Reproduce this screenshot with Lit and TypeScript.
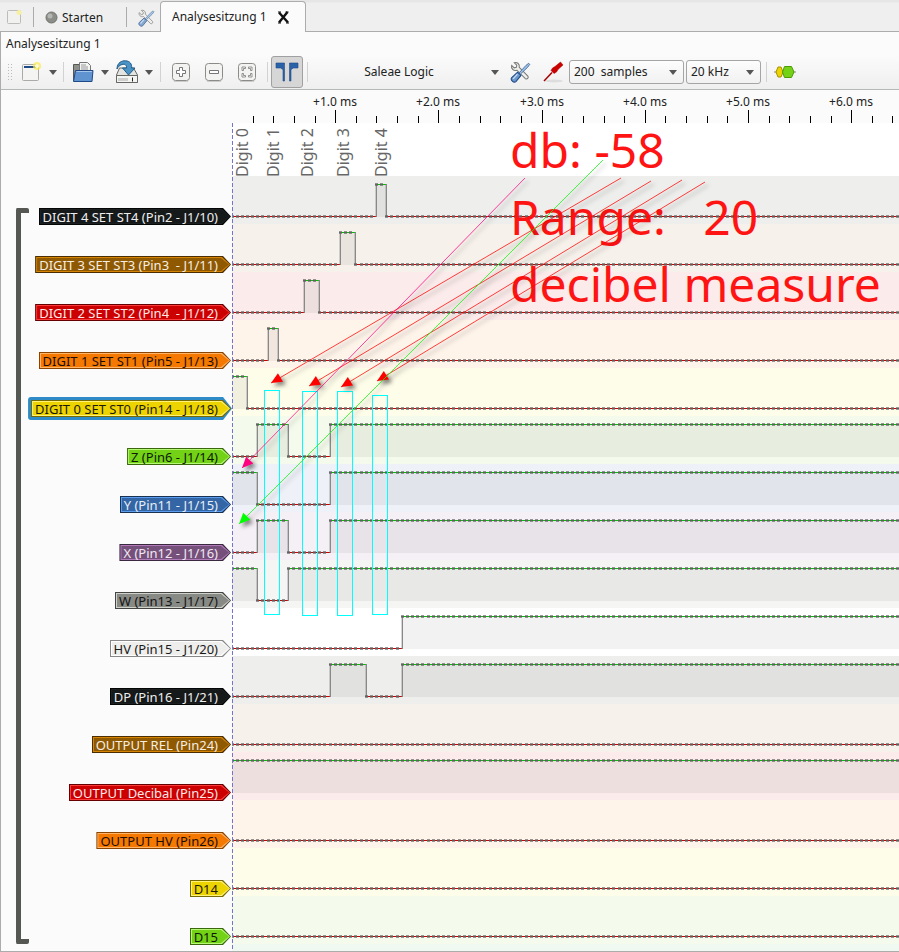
import { LitElement, html, svg, css, nothing } from "lit";
import { customElement, state } from "lit/decorators.js";

/** Horizontal distance of two samples, in pixels (20 kHz, 0.05 ms each). */
const SAMPLE = 5.16;
const SAMPLES = 400;
/** Width of everything left of the time axis. */
const GUTTER = 232;

interface Channel {
  name: string;
  tone: string;
  /** Level of the first sample, then the samples at which it changes. */
  start: 0 | 1;
  edges: number[];
}

const channels: Channel[] = [
  { name: "DIGIT 4 SET ST4 (Pin2 - J1/10)", tone: "black", start: 0, edges: [28, 30] },
  { name: "DIGIT 3 SET ST3 (Pin3  - J1/11)", tone: "brown", start: 0, edges: [21, 24] },
  { name: "DIGIT 2 SET ST2 (Pin4  - J1/12)", tone: "red", start: 0, edges: [14, 17] },
  { name: "DIGIT 1 SET ST1 (Pin5 - J1/13)", tone: "orange", start: 0, edges: [7, 9] },
  { name: "DIGIT 0 SET ST0 (Pin14 - J1/18)", tone: "yellow", start: 1, edges: [3] },
  { name: "Z (Pin6 - J1/14)", tone: "green", start: 0, edges: [5, 11, 19] },
  { name: "Y (Pin11 - J1/15)", tone: "blue", start: 1, edges: [5, 19] },
  { name: "X (Pin12 - J1/16)", tone: "purple", start: 0, edges: [5, 11, 19] },
  { name: "W (Pin13 - J1/17)", tone: "grey", start: 1, edges: [5, 11] },
  { name: "HV (Pin15 - J1/20)", tone: "white", start: 0, edges: [33] },
  { name: "DP (Pin16 - J1/21)", tone: "black", start: 0, edges: [19, 26, 33] },
  { name: "OUTPUT REL (Pin24)", tone: "brown", start: 0, edges: [] },
  { name: "OUTPUT Decibal (Pin25)", tone: "red", start: 1, edges: [] },
  { name: "OUTPUT HV (Pin26)", tone: "orange", start: 0, edges: [] },
  { name: "D14", tone: "yellow", start: 0, edges: [] },
  { name: "D15", tone: "green", start: 0, edges: [] },
];

const at = (n: number) => Math.floor(n * SAMPLE);

const toolsIcon = svg`
  <path d="M2.500 4.200 5 6.500 7 6 7.400 4 5 1.600c2.400-.8 5.400.8 4.800 4.400l8.200 8.400c1.200 1.600-.8 3.600-2.400 2.400L7.600 8.800C4.200 9.800 1.800 7 2.500 4.200z" fill="#eeeeec" stroke="#777975"/>
  <path d="M18.800 2.200 19.800 3.200 17.800 6 10.800 12.600 9.600 11.400 16.200 4.200z" fill="#9fc0e6" stroke="#3c6598" stroke-width=".8"/>
  <path d="M8.200 10.600 11.400 13.800 6.600 19.600C4.600 21.400.8 18 2.600 15.800z" fill="#6b97cc" stroke="#204a87"/>
  <path d="M8 12.500 4 17" stroke="#c8dcf3" stroke-width="1.200"/>`;

@customElement("app-root")
export class AppRoot extends LitElement {
  @state() private selected = 4;
  @state() private axis = 0;

  private observer = new ResizeObserver(() => this.measure());

  private measure() {
    this.axis = Math.max(0, this.clientWidth - GUTTER);
  }

  connectedCallback() {
    super.connectedCallback();
    this.observer.observe(this);
    this.measure();
  }

  disconnectedCallback() {
    super.disconnectedCallback();
    this.observer.disconnect();
  }

  static styles = css`
    :host {
      display: block;
      overflow: hidden;
      background: #ededed;
      color: #222;
      font: 12px/16px "Noto Sans", "Open Sans", sans-serif;
    }
    * { box-sizing: border-box; }
    button, select {
      font: inherit;
      color: inherit;
      margin: 0;
      padding: 0;
      border: 0;
      background: none;
    }
    svg { display: block; flex: none; }

    .tabs {
      display: flex;
      height: 32px;
      padding-left: 6px;
      align-items: stretch;
      background: linear-gradient(#e6e6e6 0 2px, #efefef 3px);
      box-shadow: inset 0 -1px #acacac;
    }
    .tabs > button { display: flex; align-items: center; padding-top: 3px; }
    .tabs .run { gap: 4px; padding-left: 11px; width: 92px; }
    .tabs .cfg { padding-left: 10px; width: 33px; }
    .rule { width: 1px; background: #acacac; margin: 7px 0 5px; }
    .tabs .new { width: 27px; padding-bottom: 1px; }
    .tab {
      display: flex;
      align-items: center;
      gap: 8px;
      width: 146px;
      padding-left: 11px;
      margin-top: 1px;
      border: 1px solid #acacac;
      border-bottom: 0;
      border-radius: 4px 4px 0 0;
      background: #fbfbfb;
      white-space: nowrap;
    }
    .tab span { width: 97px; }

    .window { border: solid #acacac; border-width: 0 0 1px 1px; background: #fbfbfb; }
    .title { margin: 0; padding: 4px 5px 3px; height: 23px; font: inherit; }

    .bar {
      display: flex;
      align-items: center;
      height: 35px;
      padding-left: 6px;
      background: linear-gradient(#fbfbfb, #efefef);
      border-bottom: 1px solid #b4b8b6;
    }
    .bar > * { flex: none; }
    .bar button, .bar .cell { display: flex; align-items: center; justify-content: center; height: 32px; }
    .grip {
      width: 5px;
      height: 18px;
      background: radial-gradient(circle, #bbb 1px, transparent 1px) 0 0 / 3px 3px;
    }
    .sep { width: 1px; height: 20px; background: #d2d2d2; }
    .w8 { width: 8px; }
    .w10 { width: 10px; }
    .w14 { width: 14px; }
    .w30 { width: 30px; }
    .w33 { width: 33px; }
    .w36 { width: 36px; }
    .bar .on {
      width: 32px;
      border: 1px solid #a0a0a0;
      border-radius: 3px;
      background: #d6d6d6;
    }
    .bar .device { width: 192px; padding-right: 4px; }
    .device span { flex: 1; padding-right: 4px; text-align: center; }
    .combo { position: relative; height: 24px; }
    .combo select {
      appearance: none;
      width: 100%;
      height: 24px;
      padding: 0 4px;
      border: 1px solid #a5a5a5;
      border-radius: 3px;
      background: linear-gradient(#fdfdfd, #f1f1f1);
    }
    .combo svg { position: absolute; right: 7px; top: 10px; pointer-events: none; }
    .combo.count { width: 115px; }
    .combo.rate { width: 75px; margin: 0 5px 0 2px; }

    .ruler { height: 33px; padding-left: 231px; }
    .ruler svg { width: 100%; height: 33px; }
    .ruler text { text-anchor: middle; fill: #222; }

    .board { display: grid; grid-template-columns: 31px minmax(0, 1fr); position: relative; }
    .group {
      width: 13px;
      margin: 85px 0 7px 15px;
      border: 5px solid #555753;
      border-right: 0;
      border-radius: 2px;
    }
    .head, .channel, .foot { display: grid; grid-template-columns: 200px minmax(0, 1fr); }
    .head { height: 53px; }
    .head i { grid-column: 2; background: #fff; }
    .foot { height: 7px; }
    .foot i { grid-column: 2; background: #eff8f1; }
    .channel { height: 48px; }
    .trace { width: 100%; height: 48px; background: var(--tint); }
    .channel .tag {
      position: relative;
      isolation: isolate;
      justify-self: end;
      align-self: end;
      height: 17px;
      margin: 0 1px -1px 0;
      padding: 2px 13px 0 4px;
      font-size: 13px;
      line-height: 15px;
      white-space: pre;
      color: var(--ink);
    }
    .tag::before, .tag::after, .tag i {
      content: "";
      position: absolute;
      clip-path: polygon(0 0, calc(100% - 8px) 0, 100% 50%, calc(100% - 8px) 100%, 0 100%);
    }
    .tag::before { z-index: -2; inset: 0; background: var(--line); }
    .tag::after { z-index: -1; inset: 2px; background: var(--fill); }
    .tag i { z-index: -1; inset: 1px; background: var(--shine); }
    .tag b {
      position: absolute;
      z-index: -3;
      inset: -3px -1px -3px -3px;
      border-radius: 3px;
      background: #2f8bc8;
      clip-path: polygon(0 0, calc(100% - 9px) 0, 100% 50%, calc(100% - 9px) 100%, 0 100%);
    }

    .black { --fill: #16191a; --shine: #1c2021; --line: #050606; --ink: #eee; --tint: #eeeeec; }
    .brown { --fill: #8f5902; --shine: #d58404; --line: #4a2e01; --ink: #f6eee2; --tint: #f6f1ea; }
    .red { --fill: #cc0000; --shine: #ff3c3c; --line: #660000; --ink: #fbe8e8; --tint: #fbebeb; }
    .orange { --fill: #f57900; --shine: #ffb468; --line: #8a4400; --ink: #1c0e00; --tint: #fef4ea; }
    .yellow { --fill: #edd400; --shine: #fff27a; --line: #776a00; --ink: #1c1900; --tint: #fefdea; }
    .green { --fill: #73d216; --shine: #b4f876; --line: #3a690b; --ink: #0e1a02; --tint: #f4fbed; }
    .blue { --fill: #3465a4; --shine: #5a9cf0; --line: #1a3252; --ink: #e6eef8; --tint: #eef2f8; }
    .purple { --fill: #75507b; --shine: #b07ab8; --line: #3a283e; --ink: #f0e8f2; --tint: #f5f0f5; }
    .grey { --fill: #888a85; --shine: #cfd2ca; --line: #444542; --ink: #141414; --tint: #f5f5f4; }
    .white { --fill: #eeeeec; --shine: #fff; --line: #888; --ink: #1a1a1a; --tint: #fff; }

    .fill { fill: #000; fill-opacity: .05; }
    .edge { fill: #888; }
    .soft { fill: #888; fill-opacity: .35; }
    .lo { fill: #c80000; }
    .hi { fill: #00c000; }
    .base { fill: #000; fill-opacity: .05; }
    .dot { fill: #606060; fill-opacity: .85; }
    .halo { fill: #606060; fill-opacity: .65; }

    .notes {
      position: absolute;
      left: 231px;
      top: 0;
      width: calc(100% - 231px);
      height: 100%;
      overflow: hidden;
      pointer-events: none;
    }
    .notes text { white-space: pre; }
    .big { font-size: 48px; fill: #ff1414; }
    .digit { font-size: 16px; fill: #666; }
    .cursor { stroke: #7474cc; stroke-dasharray: 4 2; }
    .box { fill: none; stroke: #00ffff; }
    .arrow { filter: drop-shadow(3px 3px 2px rgba(0, 0, 0, .5)); }
  `;

  private caret() {
    return html`<svg width="8" height="5" viewBox="0 0 8 5" aria-hidden="true"><path d="M0 0h8L4 5z" fill="#555"/></svg>`;
  }

  private trace(ch: Channel) {
    const bounds = [0, ...ch.edges, SAMPLES];
    const parts = [];
    const levels: number[] = [];
    for (let i = 0; i + 1 < bounds.length; i++) {
      const level = (ch.start + i) % 2;
      const x = at(bounds[i]);
      const w = at(bounds[i + 1]) - x;
      for (let n = bounds[i]; n < bounds[i + 1]; n++) levels[n] = level;
      if (level) {
        parts.push(svg`<rect class="fill" x=${x} y="8" width=${w} height="32"/>
          <rect class="base" x=${x} y="40" width=${w} height="1"/>
          <rect class="hi" x=${x} y="8" width=${w} height="1"/>`);
      } else {
        parts.push(svg`<rect class="lo" x=${x} y="40" width=${w} height="1"/>`);
      }
      if (i > 0) {
        parts.push(svg`<rect class="edge" x=${x} y="8" width="1" height="33"/>
          <rect class="soft" x=${x - 1} y="8" width="1" height="33"/>`);
      }
    }
    const top = (l: number) => (l ? 7 : 39);
    const halo = levels.map((l, n) => `M${at(n) - 1} ${top(l)}h3v3h-3z`).join("");
    const dots = levels.map((l, n) => `M${at(n) - 1} ${top(l) + 1}h3v1h-3z`).join("");
    return html`<svg class="trace ${ch.tone}" aria-hidden="true">${parts}<path class="halo" d=${halo}/><path class="dot" d=${dots}/></svg>`;
  }

  private ruler() {
    const ticks = [];
    for (let i = 1; i * 4 * SAMPLE < this.axis; i++) {
      const x = Math.round(i * 4 * SAMPLE);
      const major = i % 5 === 0;
      ticks.push(svg`<rect x=${x} y=${major ? 20 : 26} width="1" height=${major ? 13 : 7}/>
        ${major && x + 24 < this.axis ? svg`<text x=${x} y="16">+${(i / 5).toFixed(1)} ms</text>` : nothing}`);
    }
    return html`<div class="ruler"><svg>${ticks}</svg></div>`;
  }

  private arrow(x1: number, y1: number, x2: number, y2: number, color: string) {
    const angle = (Math.atan2(y2 - y1, x2 - x1) * 180) / Math.PI;
    return svg`<g class="arrow">
      <path d="M${x1} ${y1}L${x2} ${y2}" stroke=${color} stroke-opacity=".75"/>
      <path d="M0 0-11-5V5z" fill=${color} transform="translate(${x2} ${y2}) rotate(${angle})"/>
    </g>`;
  }

  private notes() {
    return html`<svg class="notes">
      <path class="cursor" d="M.5 0V1000"/>
      ${[16, 47, 81, 117, 155].map(
        (x, i) => svg`<text class="digit" transform="translate(${x} 54) rotate(-90)">Digit ${i}</text>`
      )}
      <text class="big" x="278" y="45">db: -58</text>
      <text class="big" x="278" y="112">Range:   20</text>
      <text class="big" x="278" y="179">decibel measure</text>
      ${[[32, 267, 224], [70, 268, 224], [105, 268, 224], [140, 272, 219]].map(
        ([x, y, h]) => svg`<rect class="box" x="${x}.5" y="${y}.5" width="15" height=${h}/>`
      )}
      ${this.arrow(389, 55, 39, 260, "#ff0000")}
      ${this.arrow(419, 58, 77, 263, "#ff0000")}
      ${this.arrow(450, 57, 109, 264, "#ff0000")}
      ${this.arrow(473, 59, 145, 258, "#ff0000")}
      ${this.arrow(293, 55, 10, 345, "#ff0080")}
      ${this.arrow(371, 37, 7, 401, "#00ff00")}
    </svg>`;
  }

  render() {
    return html`
      <nav class="tabs">
        <button class="new" aria-label="Neue Sitzung">
          <svg width="16" height="16" viewBox="0 0 16 16">
            <rect x="1.500" y="1.500" width="13" height="13" rx="1" fill="#f1f1f0" stroke="#bcbcba"/>
            <circle cx="13" cy="3.500" r="2.500" fill="#f6f0a0"/>
          </svg>
        </button>
        <span class="rule"></span>
        <button class="run">
          <svg width="13" height="13" viewBox="0 0 13 13">
            <circle cx="6.500" cy="6.500" r="5.500" fill="#8b8d88" stroke="#70726e"/>
            <circle cx="5" cy="5" r="2.500" fill="#b4b6b1"/>
          </svg>
          Starten
        </button>
        <span class="rule"></span>
        <button class="cfg" aria-label="Einstellungen">
          <svg width="18" height="18" viewBox="0 0 21 21" opacity=".8">${toolsIcon}</svg>
        </button>
        <div class="tab">
          <span>Analysesitzung 1</span>
          <button aria-label="Schließen">
            <svg width="13" height="13" viewBox="0 0 13 13">
              <path d="M2 1.500 11 11.500M10.500 1 2 11.500" stroke="#111" stroke-width="2.400"/>
              <path d="M1 1h3M8.500 1h3M1 12h3M9 12h3" stroke="#111" stroke-width="1"/>
            </svg>
          </button>
        </div>
      </nav>
      <main class="window">
        <h1 class="title">Analysesitzung 1</h1>
        <div class="bar" role="toolbar">
          <span class="grip"></span>
          <button class="w36" aria-label="Neu">
            <svg width="22" height="22" viewBox="0 0 22 22">
              <rect x="3.500" y="3.500" width="16" height="16" rx="1" fill="#f4f4f3" stroke="#a9aba7"/>
              <path d="M5 5h13v2H5z" fill="#204a87"/>
              <circle cx="18" cy="5" r="4" fill="#fce94f" opacity=".7"/>
              <circle cx="18" cy="5" r="2" fill="#fffbd0"/>
            </svg>
          </button>
          <span class="cell w10">${this.caret()}</span>
          <span class="cell w10"><span class="sep"></span></span>
          <button class="w30" aria-label="Öffnen">
            <svg width="22" height="22" viewBox="0 0 22 22">
              <path d="M1.500 19.500V3.500h7l1 2v14z" fill="#8e908c" stroke="#555753"/>
              <path d="M7.500 12V1.500h8l3 3V12z" fill="#f4f4f3" stroke="#777"/>
              <path d="M9 4h5M9 6h7M9 8h7" stroke="#999"/>
              <path d="M3.500 9.500h17.500l-1 11H1.500z" fill="#5f94d0" stroke="#204a87"/>
              <path d="M4.500 10.500H20" stroke="#a5c5ea"/>
            </svg>
          </button>
          <span class="cell w14">${this.caret()}</span>
          <button class="w30" aria-label="Speichern">
            <svg width="24" height="24" viewBox="0 0 24 24">
              <path d="M4.500 8h14l4 7v7.500h-21V15z" fill="#e4e4e2" stroke="#666864"/>
              <path d="M1.500 15.500h21v7h-21z" fill="#f4f4f3" stroke="#666864"/>
              <path d="M4 18v3M6 18v3M8 18v3M10 18v3M12 18v3" stroke="#aaa"/>
              <path d="M17.500 17.500v4" stroke="#222"/>
              <path d="M2 9C2 2.500 7 .5 10.500.8 15 1 17 4 16.600 8H20l-6.500 7L7.500 8h4C12 5.500 10 3.500 7 4.500 4 5.500 3 7 2 9z" fill="#4b93c4" stroke="#1f5c8a"/>
            </svg>
          </button>
          <span class="cell w14">${this.caret()}</span>
          <span class="cell w8"><span class="sep"></span></span>
          ${[
            ["Vergrößern", svg`<path d="M8.500 5.500h3v3h3v3h-3v3h-3v-3h-3v-3h3z" fill="#fff" stroke="#777"/>`],
            ["Verkleinern", svg`<path d="M5.500 8.500h9v3h-9z" fill="#fff" stroke="#777"/>`],
            ["Einpassen", svg`<path d="M5 8.500V5h3.500v1.500H6.500v2zM15 8.500V5h-3.500v1.500h2v2zM5 11.500V15h3.500v-1.500H6.500v-2zM15 11.500V15h-3.500v-1.500h2v-2z" fill="#fff" stroke="#777" stroke-width=".8"/>`],
          ].map(
            ([label, glyph]) => html`<button class="w33" aria-label=${label}>
              <svg width="20" height="20" viewBox="0 0 20 20">
                <rect x="1.500" y="1.500" width="17" height="17" rx="3" fill="#f3f3f2" stroke="#8a8c88"/>
                <path d="M3 19.500h14" stroke="#ccc"/>
                ${glyph}
              </svg>
            </button>`
          )}
          <span class="cell w8"><span class="sep"></span></span>
          <button class="on" aria-label="Cursor anzeigen" aria-pressed="true">
            <svg width="24" height="20" viewBox="0 0 24 20">
              <path d="M1 1h8.500v18h-1.500V7.500L5.500 6H1zM23 1h-8.500v18h1.500V7.500L18.500 6H23z" fill="#2a62a8" stroke="#204a87" stroke-width=".6"/>
            </svg>
          </button>
          <span class="cell w8"><span class="sep"></span></span>
          <button class="device"><span>Saleae Logic</span>${this.caret()}</button>
          <button class="w33" aria-label="Gerät konfigurieren">
            <svg width="22" height="22" viewBox="0 0 21 21">${toolsIcon}</svg>
          </button>
          <button class="w33" aria-label="Kanäle">
            <svg width="22" height="22" viewBox="0 0 22 22">
              <ellipse cx="12" cy="20" rx="9" ry="1.500" fill="#ddd"/>
              <path d="M2 20 10 11.500" stroke="#a40000" stroke-width="1.500"/>
              <path d="M9 9.500 12 12.500 14.500 11 16 8.500 21 4 18.500 1 13 5.500 10.500 7z" fill="#cc0000" stroke="#a40000" stroke-width=".5"/>
            </svg>
          </button>
          <label class="combo count"><select aria-label="Anzahl Samples"><option>200&nbsp; samples</option></select>${this.caret()}</label>
          <label class="combo rate"><select aria-label="Abtastrate"><option>20 kHz</option></select>${this.caret()}</label>
          <span class="sep"></span>
          <button class="w36" aria-label="Protokolldekoder">
            <svg width="22" height="14" viewBox="0 0 22 14">
              <path d="M0 7h22" stroke="#888"/>
              <path d="M4 2h3l2 5-2 5H4L2 7z" fill="#edd400" stroke="#a89000"/>
              <path d="M10.500 1.500h7L20 7l-2.500 5.500h-7L8.500 7z" fill="#73d216" stroke="#4e9a06"/>
            </svg>
          </button>
        </div>
        ${this.ruler()}
        <div class="board">
          <div class="group"></div>
          <div>
            <div class="head"><i></i></div>
            ${channels.map(
              (ch, i) => html`<div class="channel">
                <button class="tag ${ch.tone}" @click=${() => (this.selected = i)}>${ch.name}<i></i>${i === this.selected ? html`<b></b>` : nothing}</button>
                ${this.trace(ch)}
              </div>`
            )}
            <div class="foot"><i></i></div>
          </div>
          ${this.notes()}
        </div>
      </main>
    `;
  }
}
